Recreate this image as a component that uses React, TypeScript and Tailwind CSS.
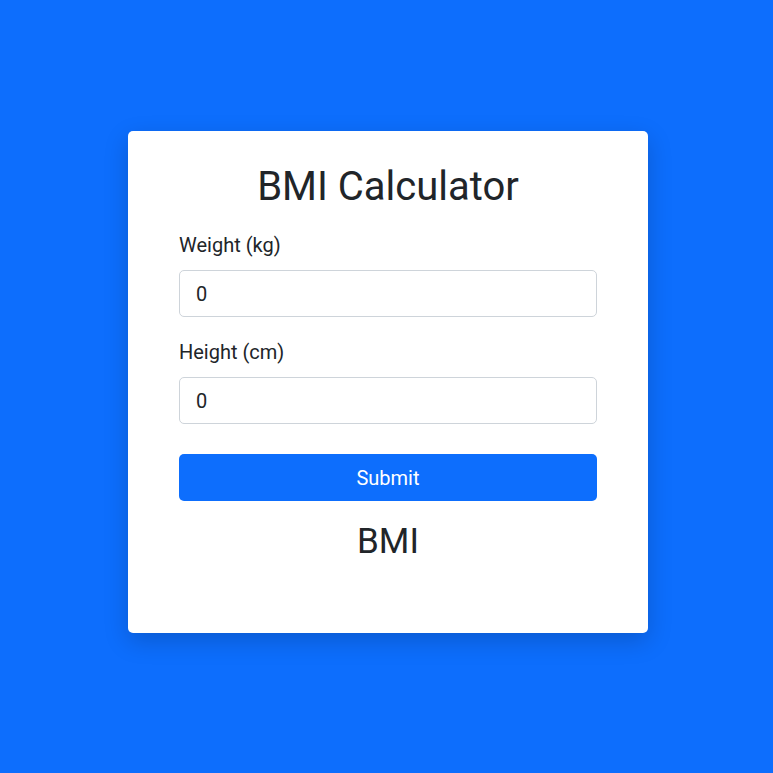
export default function App() {
    return (
        <div className="min-h-screen w-full bg-[#0d6efd] flex justify-center pt-[131px] pl-[3px]" style={{ fontFamily: "Roboto, 'Liberation Sans', sans-serif" }}>
            <div className="w-[520px] h-[502px] bg-white rounded-[5px] shadow-[0_8px_24px_rgba(0,0,0,0.18)] px-[51px] pt-[32px] text-[#212529]">
                <h1 className="text-[40px] leading-[48px] text-center font-normal mb-[21px]">BMI Calculator</h1>
                <form onSubmit={(e) => e.preventDefault()}>
                    <label className="block text-[20px] leading-[27px] mb-[11px]">Weight (kg)</label>
                    <input
                        type="text"
                        defaultValue="0"
                        className="block w-full h-[47px] border border-[#ced4da] rounded-[5px] px-4 text-[20px] text-[#212529] outline-none"
                    />
                    <label className="block text-[20px] leading-[27px] mt-[22px] mb-[11px]">Height (cm)</label>
                    <input
                        type="text"
                        defaultValue="0"
                        className="block w-full h-[47px] border border-[#ced4da] rounded-[5px] px-4 text-[20px] text-[#212529] outline-none"
                    />
                    <button
                        type="submit"
                        className="block w-full h-[47px] mt-[30px] bg-[#0d6efd] text-white text-[20px] rounded-[5px]"
                    >
                        Submit
                    </button>
                </form>
                <div className="text-[35px] leading-[40px] text-center mt-[21px]">BMI</div>
            </div>
        </div>
    );
}
